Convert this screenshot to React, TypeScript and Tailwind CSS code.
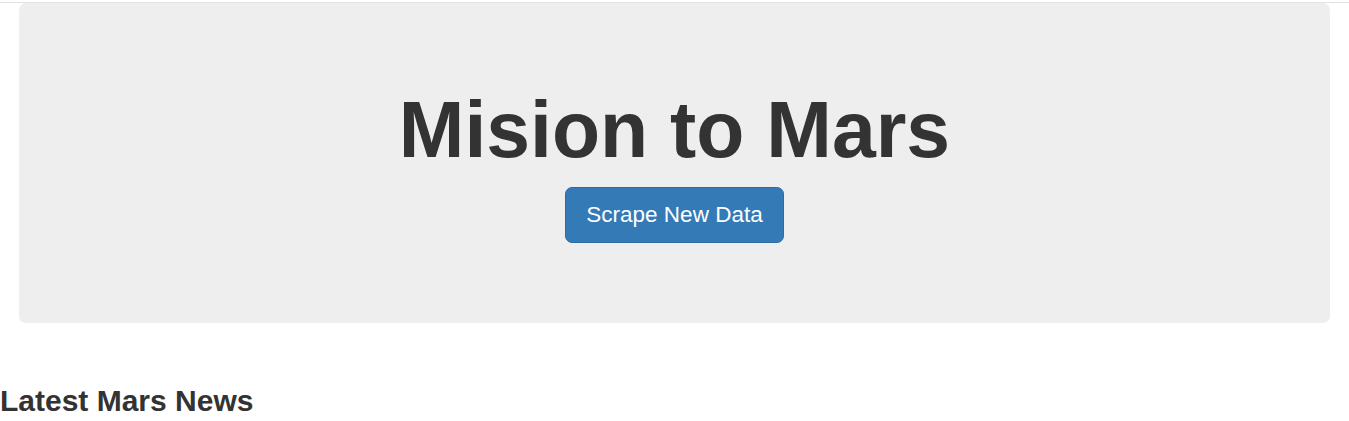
function App() {
  const fontStyle = "font-['Liberation_Sans',Arial,sans-serif]";

  return (
    <div className={`min-h-[421px] bg-white text-[#333] ${fontStyle}`}>
      <div className="mt-[2px] border-t border-[#e2e2e2]">
        <div className="mx-[19px] rounded-[7px] bg-[#eeeeee] pt-[84px] pb-[80px] text-center">
          <h1 className="mb-[13px] text-[78.75px] leading-[1.1] font-bold text-[#333]">
            Mision to Mars
          </h1>
          <button
            type="button"
            className="rounded-[7px] border border-[#2e6da4] bg-[#337ab7] px-[20px] py-[12px] text-[22.5px] leading-[1.3333] text-white">
            Scrape New Data
          </button>
        </div>
      </div>
      <h3 className="mt-[61px] text-[30px] leading-[1.1] font-bold text-[#333]">
        Latest Mars News
      </h3>
    </div>
  );
}

export default App;
